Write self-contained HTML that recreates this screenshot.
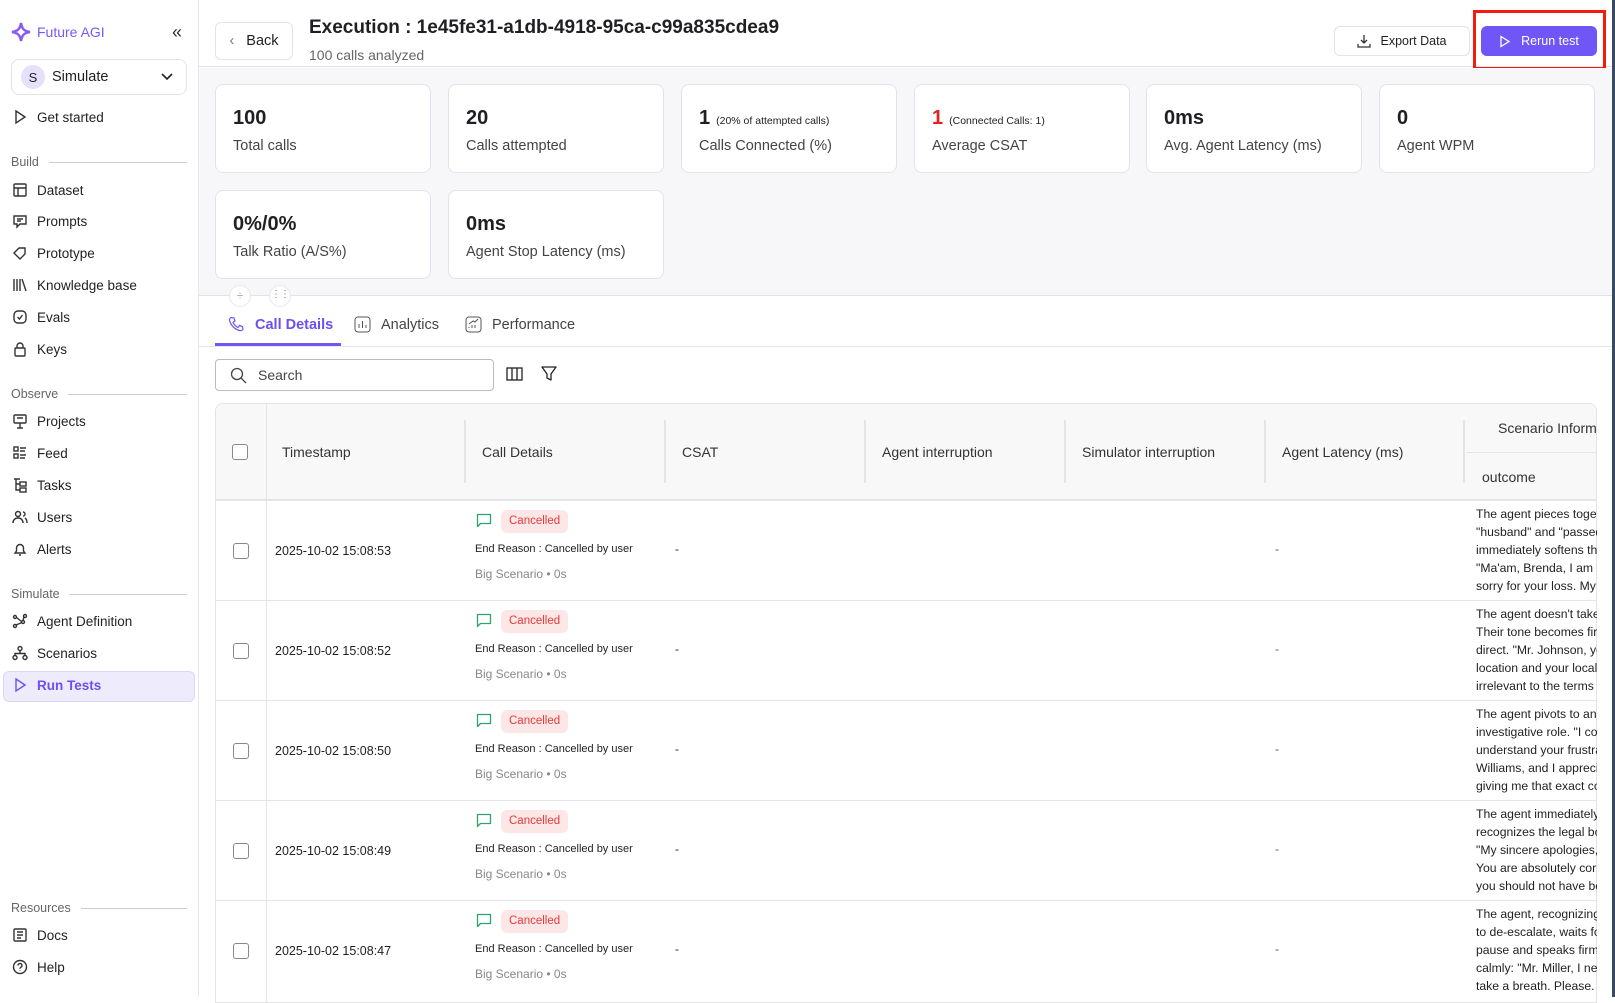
<!DOCTYPE html>
<html><head><meta charset="utf-8"><style>
*{box-sizing:border-box;margin:0;padding:0}
body{width:1615px;height:997px;overflow:hidden;font-family:"Liberation Sans",sans-serif;color:#1f1f24;background:#fff;position:relative;font-size:14px}
.abs{position:absolute}
.side{left:0;top:0;width:199px;height:997px;border-right:1px solid #e6e6ec;background:#fff}
.nav{position:absolute;left:12px;display:flex;align-items:center;gap:9px;font-size:13.5px;color:#222}
.nav svg{width:16px;height:16px;stroke:#333;fill:none;stroke-width:1.4}
.sec{position:absolute;left:11px;font-size:12.5px;color:#666;display:flex;align-items:center;width:176px}
.sec:after{content:"";flex:1;height:1px;background:#ccc;margin-left:10px}
.card{position:absolute;width:216px;height:89px;background:#fff;border:1px solid #e2e2ee;border-radius:8px;padding:0 17px}
.card b{position:absolute;top:22px;left:17px;font-size:20px}
.card span.l{position:absolute;top:53px;left:17px;font-size:14.5px;color:#444}
.card small{font-size:10.5px;font-weight:normal;margin-left:6px;color:#222}
.th{position:absolute;font-size:14px;color:#333}
.div{position:absolute;top:420px;width:2px;height:63px;background:#e4e4e4}
.row{position:absolute;left:216px;width:1381px;height:100px;border-top:1px solid #e4e4e4}
.cb{position:absolute;width:16px;height:16px;border:1.5px solid #888;border-radius:3px;background:#fff}
.out{position:absolute;left:1260px;top:12px;width:121px;overflow:hidden;white-space:nowrap;font-size:12.2px;line-height:18px;color:#222}
</style></head><body>
<div class="abs side">
 <div class="abs" style="left:11px;top:22px;display:flex;align-items:center;gap:6px;color:#7857fc;font-size:14px">
  <svg width="20" height="20" viewBox="0 0 20 20"><path d="M10 1 C11 7 13 9 19 10 C13 11 11 13 10 19 C9 13 7 11 1 10 C7 9 9 7 10 1Z" fill="none" stroke="#8a5cf6" stroke-width="2.5"/></svg>Future AGI</div>
 <div class="abs" style="left:172px;top:22px;font-size:18px;color:#333">«</div>
 <div class="abs" style="left:11px;top:59px;width:176px;height:36px;border:1px solid #e2e2e8;border-radius:8px;display:flex;align-items:center;padding-left:9px;gap:7px;font-size:14.5px">
  <span style="width:24px;height:24px;border-radius:12px;background:#e6e0fb;display:inline-flex;align-items:center;justify-content:center;font-size:13px">S</span>Simulate
  <svg style="position:absolute;right:12px" width="14" height="10" viewBox="0 0 14 10"><path d="M2 2l5 5 5-5" stroke="#222" stroke-width="1.6" fill="none"/></svg></div>
 <div class="nav" style="top:109px"><svg viewBox="0 0 16 16"><path d="M4 2l9 6-9 6z"/></svg>Get started</div>
 <div class="sec" style="top:155px">Build</div>
 <div class="nav" style="top:182px"><svg viewBox="0 0 16 16"><rect x="2" y="2" width="12" height="12" rx="1"/><path d="M2 6h12M6 6v8"/></svg>Dataset</div>
 <div class="nav" style="top:213px"><svg viewBox="0 0 16 16"><path d="M2 3h12v8H8l-3 3v-3H2z M5 6h6M5 8h4"/></svg>Prompts</div>
 <div class="nav" style="top:245px"><svg viewBox="0 0 16 16"><path d="M2 8l5-5h6v6l-5 5z"/></svg>Prototype</div>
 <div class="nav" style="top:277px"><svg viewBox="0 0 16 16"><path d="M2 2v12M5 2v12M8 2v12M10 2l4 12"/></svg>Knowledge base</div>
 <div class="nav" style="top:309px"><svg viewBox="0 0 16 16"><rect x="2" y="2" width="12" height="12" rx="4"/><path d="M5.5 8l2 2 3-4"/></svg>Evals</div>
 <div class="nav" style="top:341px"><svg viewBox="0 0 16 16"><rect x="3" y="7" width="10" height="8" rx="1"/><path d="M5 7V5a3 3 0 016 0v2"/></svg>Keys</div>
 <div class="sec" style="top:387px">Observe</div>
 <div class="nav" style="top:413px"><svg viewBox="0 0 16 16"><rect x="2" y="2" width="12" height="8" rx="1"/><path d="M8 10v5M5 15h6M5 5h6"/></svg>Projects</div>
 <div class="nav" style="top:445px"><svg viewBox="0 0 16 16"><rect x="2" y="2" width="4" height="4"/><rect x="2" y="9" width="4" height="4"/><path d="M8 3h6M8 6h5M8 10h6M8 13h5"/></svg>Feed</div>
 <div class="nav" style="top:477px"><svg viewBox="0 0 16 16"><path d="M2 2h6M4 2v11h4M4 7h4"/><rect x="8" y="5" width="6" height="4"/><rect x="8" y="11" width="6" height="4"/></svg>Tasks</div>
 <div class="nav" style="top:509px"><svg viewBox="0 0 16 16"><circle cx="6" cy="5" r="2.5"/><path d="M1 14c0-3 2-5 5-5s5 2 5 5M11 3a2 2 0 010 4M13 9c1.5 1 2 3 2 5"/></svg>Users</div>
 <div class="nav" style="top:541px"><svg viewBox="0 0 16 16"><path d="M3 12h10l-1.5-2V7a3.5 3.5 0 00-7 0v3z M7 14h2"/></svg>Alerts</div>
 <div class="sec" style="top:587px">Simulate</div>
 <div class="nav" style="top:613px"><svg viewBox="0 0 16 16"><circle cx="3" cy="4" r="1.5"/><circle cx="13" cy="3" r="1.5"/><circle cx="3" cy="13" r="1.5"/><circle cx="11" cy="9" r="1.5"/><path d="M4.5 4.5l5 4M4 12l6-2.5M12 4l-1 3.5"/></svg>Agent Definition</div>
 <div class="nav" style="top:645px"><svg viewBox="0 0 16 16"><circle cx="8" cy="3.5" r="2"/><circle cx="3" cy="12.5" r="2"/><circle cx="13" cy="12.5" r="2"/><path d="M8 5.5v3M3 10.5v-2h10v2"/></svg>Scenarios</div>
 <div class="abs" style="left:3px;top:671px;width:192px;height:31px;background:#eeebfd;border:1px solid #ddd6fb;border-radius:6px"></div>
 <div class="nav" style="top:677px;color:#6d4ff0;font-weight:bold"><svg viewBox="0 0 16 16" style="stroke:#6d4ff0"><path d="M4 2l9 6-9 6z"/></svg>Run Tests</div>
 <div class="sec" style="top:901px">Resources</div>
 <div class="nav" style="top:927px"><svg viewBox="0 0 16 16"><rect x="2" y="2" width="12" height="12" rx="1"/><path d="M5 5h6M5 8h6M5 11h4"/></svg>Docs</div>
 <div class="nav" style="top:959px"><svg viewBox="0 0 16 16"><circle cx="8" cy="8" r="6.5"/><path d="M6 6.5a2 2 0 113 1.7c-.7.4-1 .8-1 1.6M8 11.5v.5"/></svg>Help</div>
</div>

<!-- header -->
<div class="abs" style="left:199px;top:0;width:1413px;height:67px;border-bottom:1px solid #e2e2ea;background:#fff"></div>
<div class="abs" style="left:215px;top:22px;width:78px;height:38px;border:1px solid #e2e2e8;border-radius:6px;display:flex;align-items:center;justify-content:center;gap:12px;font-size:14.5px"><span style="color:#777">‹</span>Back</div>
<div class="abs" style="left:309px;top:17px;font-size:19px;font-weight:bold">Execution : 1e45fe31-a1db-4918-95ca-c99a835cdea9</div>
<div class="abs" style="left:309px;top:47px;font-size:14px;color:#666">100 calls analyzed</div>
<div class="abs" style="left:1334px;top:26px;width:136px;height:30px;border:1px solid #e2e2e8;border-radius:6px;display:flex;align-items:center;justify-content:center;gap:9px;font-size:12.5px">
 <svg width="14" height="14" viewBox="0 0 14 14"><path d="M7 1v8M4 6l3 3 3-3M1 10v3h12v-3" stroke="#333" fill="none" stroke-width="1.3"/></svg>Export Data</div>
<div class="abs" style="left:1473px;top:10px;width:133px;height:60px;border:3px solid #f21b0c"></div>
<div class="abs" style="left:1481px;top:26px;width:116px;height:30px;background:#7056f7;border-radius:6px;color:#fff;display:flex;align-items:center;justify-content:center;gap:10px;font-size:12.5px">
 <svg width="12" height="13" viewBox="0 0 12 13"><path d="M2 1.5l8 5-8 5z" stroke="#fff" fill="none" stroke-width="1.3"/></svg>Rerun test</div>

<!-- stats area -->
<div class="abs" style="left:199px;top:68px;width:1413px;height:228px;background:#f7f7f9;border-bottom:1px solid #e2e2ee"></div>
<div class="card" style="left:215px;top:84px"><b>100</b><span class="l">Total calls</span></div>
<div class="card" style="left:448px;top:84px"><b>20</b><span class="l">Calls attempted</span></div>
<div class="card" style="left:681px;top:84px"><b>1<small>(20% of attempted calls)</small></b><span class="l">Calls Connected (%)</span></div>
<div class="card" style="left:914px;top:84px"><b><span style="color:#e0241e">1</span><small>(Connected Calls: 1)</small></b><span class="l">Average CSAT</span></div>
<div class="card" style="left:1146px;top:84px"><b>0ms</b><span class="l">Avg. Agent Latency (ms)</span></div>
<div class="card" style="left:1379px;top:84px"><b>0</b><span class="l">Agent WPM</span></div>
<div class="card" style="left:215px;top:190px"><b>0%/0%</b><span class="l">Talk Ratio (A/S%)</span></div>
<div class="card" style="left:448px;top:190px"><b>0ms</b><span class="l">Agent Stop Latency (ms)</span></div>
<div class="abs" style="left:229px;top:285px;width:22px;height:22px;border-radius:11px;background:#fff;border:1px solid #e6e6ec;color:#999;font-size:11px;text-align:center;line-height:20px">÷</div>
<div class="abs" style="left:269px;top:285px;width:22px;height:22px;border-radius:11px;background:#fff;border:1px solid #e6e6ec;color:#777;font-size:10px;text-align:center;line-height:18px;letter-spacing:-1px">⋮⋮</div>

<!-- tabs -->
<div class="abs" style="left:199px;top:346px;width:1413px;height:1px;background:#e6e6ec"></div>
<div class="abs" style="left:215px;top:343px;width:126px;height:3px;background:#7056f7"></div>
<div class="abs" style="left:228px;top:316px;display:flex;align-items:center;gap:10px;color:#6d4ff0;font-size:14.5px;font-weight:bold">
 <svg width="17" height="17" viewBox="0 0 17 17"><path d="M3 1.5l3 .5 1 3-2 1.5c1 2 3 4 5 5l1.5-2 3 1 .5 3c-1 1-2 1.5-3.5 1C6 13 3 9 1.5 4.5 1.5 3 2 2 3 1.5z" stroke="#7056f7" fill="none" stroke-width="1.2"/></svg>Call Details</div>
<div class="abs" style="left:354px;top:316px;display:flex;align-items:center;gap:10px;color:#444;font-size:14.5px">
 <svg width="17" height="17" viewBox="0 0 17 17"><rect x="1" y="1" width="15" height="15" rx="3" stroke="#555" fill="none"/><path d="M5 12V8M8.5 12V5M12 12V9" stroke="#555"/></svg>Analytics</div>
<div class="abs" style="left:465px;top:316px;display:flex;align-items:center;gap:10px;color:#444;font-size:14.5px">
 <svg width="17" height="17" viewBox="0 0 17 17"><rect x="1" y="1" width="15" height="15" rx="3" stroke="#555" fill="none"/><path d="M4 12v-1M7 12v-3M10 12V9M4 8l4-3 2 1 3-3" stroke="#555" fill="none"/></svg>Performance</div>

<!-- search -->
<div class="abs" style="left:215px;top:359px;width:279px;height:32px;border:1px solid #bbb;border-radius:4px;display:flex;align-items:center;padding-left:14px;gap:11px;color:#444;font-size:14px">
 <svg width="17" height="17" viewBox="0 0 17 17"><circle cx="7" cy="7" r="5.5" stroke="#444" fill="none" stroke-width="1.3"/><path d="M11 11l5 5" stroke="#444" stroke-width="1.3"/></svg>Search</div>
<svg class="abs" style="left:506px;top:367px" width="17" height="14" viewBox="0 0 17 14"><rect x="1" y="1" width="15" height="12" stroke="#222" fill="none" stroke-width="1.3"/><path d="M6 1v12M11 1v12" stroke="#222" stroke-width="1.3"/></svg>
<svg class="abs" style="left:541px;top:366px" width="16" height="16" viewBox="0 0 16 16"><path d="M1 1h14l-5 7v6l-4-2V8z" stroke="#222" fill="none" stroke-width="1.3" stroke-linejoin="round"/></svg>

<!-- table -->
<div class="abs" style="left:215px;top:403px;width:1382px;height:600px;border:1px solid #e4e4e4;border-radius:8px 8px 0 0;overflow:hidden">
 <div class="abs" style="left:0;top:0;width:1382px;height:96px;background:#f8f8f8;border-bottom:1px solid #e4e4e4"></div>
 <div class="abs" style="left:50px;top:0;width:1px;height:600px;background:#e4e4e4"></div>
</div>
<div class="cb" style="left:232px;top:444px"></div>
<div class="th" style="left:282px;top:444px">Timestamp</div>
<div class="div" style="left:464px"></div>
<div class="th" style="left:482px;top:444px">Call Details</div>
<div class="div" style="left:664px"></div>
<div class="th" style="left:682px;top:444px">CSAT</div>
<div class="div" style="left:864px"></div>
<div class="th" style="left:882px;top:444px">Agent interruption</div>
<div class="div" style="left:1064px"></div>
<div class="th" style="left:1082px;top:444px">Simulator interruption</div>
<div class="div" style="left:1264px"></div>
<div class="th" style="left:1282px;top:444px">Agent Latency (ms)</div>
<div class="div" style="left:1463px"></div>
<div class="th" style="left:1498px;top:420px;width:99px;overflow:hidden;white-space:nowrap">Scenario Information</div>
<div class="abs" style="left:1466px;top:452px;width:131px;height:1px;background:#e4e4e4"></div>
<div class="th" style="left:1482px;top:469px">outcome</div>

<div class="row" style="top:500px"></div>
<div class="row" style="top:600px"></div>
<div class="row" style="top:700px"></div>
<div class="row" style="top:800px"></div>
<div class="row" style="top:900px"></div>

<div id="rows"></div>
<script>
var ts=["2025-10-02 15:08:53","2025-10-02 15:08:52","2025-10-02 15:08:50","2025-10-02 15:08:49","2025-10-02 15:08:47"];
var out=[["The agent pieces together","\"husband\" and \"passed","immediately softens the","\"Ma'am, Brenda, I am so","sorry for your loss. My"],
["The agent doesn't take","Their tone becomes firm","direct. \"Mr. Johnson, your","location and your local","irrelevant to the terms"],
["The agent pivots to an","investigative role. \"I could","understand your frustration","Williams, and I appreciate","giving me that exact code"],
["The agent immediately","recognizes the legal bo","\"My sincere apologies,","You are absolutely correct","you should not have been"],
["The agent, recognizing","to de-escalate, waits for","pause and speaks firmly","calmly: \"Mr. Miller, I need","take a breath. Please. I"]];
var h="";
for(var i=0;i<5;i++){var y=500+i*100;
h+='<div class="cb" style="left:233px;top:'+(y+43)+'px"></div>';
h+='<div class="abs" style="left:275px;top:'+(y+44)+'px;font-size:12.5px">'+ts[i]+'</div>';
h+='<svg class="abs" style="left:476px;top:'+(y+13)+'px" width="16" height="16" viewBox="0 0 16 16"><path d="M1.5 1.5h13v9h-10l-3 3z" stroke="#2fa36b" fill="none" stroke-width="1.3" stroke-linejoin="round"/></svg>';
h+='<div class="abs" style="left:501px;top:'+(y+10)+'px;height:23px;padding:0 8px;background:#fde6e6;border-radius:6px;color:#e23b3b;font-size:11.5px;line-height:23px">Cancelled</div>';
h+='<div class="abs" style="left:475px;top:'+(y+43)+'px;font-size:11px">End Reason : Cancelled by user</div>';
h+='<div class="abs" style="left:475px;top:'+(y+67)+'px;font-size:12px;color:#888">Big Scenario • 0s</div>';
h+='<div class="abs" style="left:675px;top:'+(y+42)+'px;font-size:12px">-</div>';
h+='<div class="abs" style="left:1275px;top:'+(y+42)+'px;font-size:12px;color:#555">-</div>';
h+='<div class="out" style="top:'+(y+5)+'px;left:1476px">'+out[i].join('<br>')+'</div>';}
document.getElementById("rows").innerHTML=h;
</script>
<div class="abs" style="left:1612px;top:0;width:3px;height:997px;background:#3b4a63"></div>
</body></html>
